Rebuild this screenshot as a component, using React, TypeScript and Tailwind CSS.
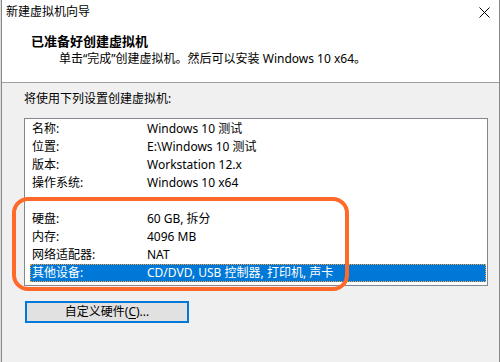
import React from 'react';

const rows: { label: string; value: string; selected?: boolean }[] = [
  { label: '名称:', value: 'Windows 10 测试' },
  { label: '位置:', value: 'E:\\Windows 10 测试' },
  { label: '版本:', value: 'Workstation 12.x' },
  { label: '操作系统:', value: 'Windows 10 x64' },
  { label: '', value: '' },
  { label: '硬盘:', value: '60 GB, 拆分' },
  { label: '内存:', value: '4096 MB' },
  { label: '网络适配器:', value: 'NAT' },
  { label: '其他设备:', value: 'CD/DVD, USB 控制器, 打印机, 声卡', selected: true },
];

export default function App() {
  return (
    <div className="h-[362px] w-[500px] overflow-hidden bg-[#dcdcdc] pl-[1px] font-['Noto_Sans','Noto_Sans_CJK_SC',sans-serif] text-[12px] text-black">
      <div className="relative h-full border-l border-r border-[#8a8a8a] bg-[#f0f0f0]">
        {/* Header */}
        <div className="h-[83px] border-b border-[#a0a0a0] bg-white">
          <div className="flex h-[24px] items-center justify-between pl-[4px] pr-[9px]">
            <span className="leading-[18px]">新建虚拟机向导</span>
            <svg width="11" height="11" viewBox="0 0 11 11" className="text-black">
              <path d="M0.5 0.5 L10.5 10.5 M10.5 0.5 L0.5 10.5" stroke="currentColor" strokeWidth="1" fill="none" />
            </svg>
          </div>
          <div className="mt-[8px] pl-[29px] text-[13px] font-bold leading-[18px]">已准备好创建虚拟机</div>
          <div className="pl-[57px] leading-[18px]">单击“完成”创建虚拟机。然后可以安装 Windows 10 x64。</div>
        </div>

        {/* Body */}
        <div className="mt-[7px] pl-[22px] leading-[18px]">将使用下列设置创建虚拟机:</div>

        <div className="ml-[22px] mt-[10px] h-[168px] w-[464px] border border-[#828790] bg-white pt-[1px]">
          {rows.map((r, i) => (
            <div
              key={i}
              className={
                r.selected
                  ? 'ml-[5px] mr-[1px] flex h-[18px] items-center bg-[#0078d7] pl-[2px] leading-[18px] text-white outline-1 -outline-offset-1 outline-dotted outline-[#f5a040]'
                  : 'ml-[5px] mr-[1px] flex h-[18px] items-center pl-[2px] leading-[18px]'
              }
            >
              <span className="w-[115px] shrink-0">{r.label}</span>
              <span>{r.value}</span>
            </div>
          ))}
        </div>

        <button className="ml-[23px] mt-[15px] flex h-[22px] w-[164px] items-center justify-center border-2 border-[#0078d7] bg-[#e1e1e1] leading-[18px]">
          自定义硬件(<span className="underline underline-offset-2">C</span>)...
        </button>

        {/* Annotation */}
        <div className="absolute left-[10px] top-[197px] h-[94px] w-[337px] rounded-[16px] border-4 border-[#ff6a2a]" />
      </div>
    </div>
  );
}
